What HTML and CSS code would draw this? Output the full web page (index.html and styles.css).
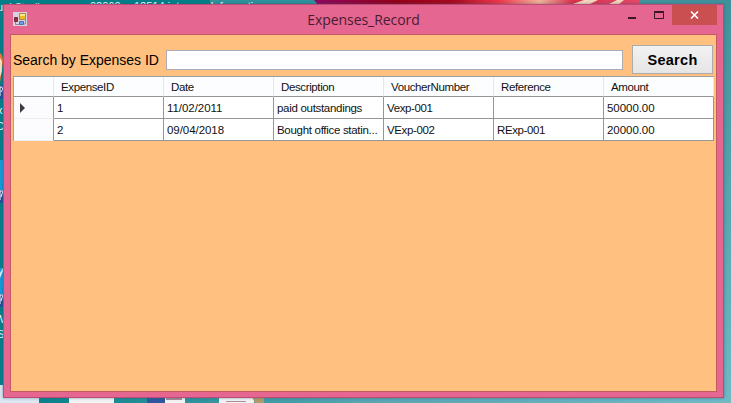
FILE: index.html
```
<!DOCTYPE html>
<html lang="en">
<head>
<meta charset="utf-8">
<title>Expenses_Record</title>
<link rel="stylesheet" href="styles.css">
</head>
<body>
<svg class="desktop" width="731" height="403" viewBox="0 0 731 403" aria-hidden="true">
  <defs>
    <linearGradient id="petal" x1="0" x2="1"><stop offset="0" stop-color="#8d0860"/><stop offset=".25" stop-color="#960018"/><stop offset=".42" stop-color="#a80b20"/><stop offset=".56" stop-color="#f0374c"/><stop offset=".68" stop-color="#f2b49a"/><stop offset=".78" stop-color="#d9304d"/><stop offset="1" stop-color="#e84a6c"/></linearGradient>
    <linearGradient id="side" x1="0" x2="0" y1="0" y2="1"><stop offset="0" stop-color="#3f929b"/><stop offset="1" stop-color="#70bac5"/></linearGradient>
    <linearGradient id="low" x1="0" x2="1"><stop offset="0" stop-color="#007f88"/><stop offset=".5" stop-color="#58a6b0"/><stop offset="1" stop-color="#70bac5"/></linearGradient>
  </defs>
  <rect width="731" height="403" fill="#008089"/>
  <rect x="210" width="110" height="5" fill="#2f929c"/>
  <path d="M314 0h332l-8 5H318z" fill="url(#petal)"/>
  <path d="M570 5l14-5h14l-10 5zM607 5l10-5h7l-6 5z" fill="#f4d6bc"/>
  <rect x="640" width="91" height="5" fill="#43929b"/>
  <rect x="723" width="8" height="403" fill="url(#side)"/>
  <rect y="397" width="731" height="6" fill="url(#low)"/>
  <path d="M0 385h4v12h35v6H0z" fill="#dce8f2"/>
  <path d="M69 397h45v6H69zM165 397h20v6h-20zM219 397h35v6h-35z" fill="#f4f4f4"/>
  <path d="M147 397h18v6h-18z" fill="#2e579e"/>
  <path d="M166 398h16v2h-16zM226 401h20v1h-20z" fill="#a78f99"/>
  <path d="M252 397h12v6h-9z" fill="#b09b70"/>
  <path d="M0 53q5 3 2 16l-2 14z" fill="#f07a32"/>
  <path d="M0 58l2 3v10l-2 6z" fill="#ffe3c9"/>
  <path d="M0 160h4v30H0zM0 268h4v26H0z" fill="#159bdc"/>
  <path d="M0 273l4-7v3l-4 9z" fill="#d5f4ff"/>
  <path d="M0 85h4v14H0zM0 190h4v13H0zM0 294h4v13H0z" fill="#244f9c"/>
  <path d="M0 96v-9h2q2 2-1 5M0 200v-9h3l-2 6M0 304v-9h3l-2 6" fill="none" stroke="#fff"/>
  <g class="desktop-label">
    <text x="-3" y="11">ual Studio</text><text x="79" y="10">w 02060</text><text x="134" y="10">12514.int</text><text x="186" y="10">ernz Information</text>
    <text x="-3" y="114">x</text><text x="-4" y="130">C</text><text x="-5" y="323">W</text><text x="-3" y="338">SI</text>
  </g>
</svg>
<main class="window">
  <header class="titlebar">
    <svg class="app-icon" width="15" height="15" viewBox="0 0 15 15">
      <path fill="#d9d3df" d="M0 0h14v14H0z"/><path fill="#f1b928" stroke="#a38b52" d="M6.500 1.500h6v6h-6z"/><path fill="#ffe681" d="M7 2h5v2H7z"/><path fill="#982d37" stroke="#713241" d="M1.500 5.500h3v4h-3z"/><path fill="#719ff0" stroke="#5369b5" d="M6.500 9.500h4v3h-4z"/><path stroke="#98838e" d="M2.500 10v2.500H6M12.500 8v4H11" fill="none"/>
    </svg>
    <h1>Expenses_Record</h1>
    <div class="controls">
      <svg width="53" height="20" viewBox="0 0 53 20"><path fill="#3a1527" d="M9 12h8v2H9z"/><path fill="none" stroke="#3a1527" d="M35.500 7.500h9v6h-9z"/><path stroke="#3a1527" d="M35 6.500h10"/></svg>
      <button class="close" aria-label="Close"><svg width="9" height="8" viewBox="0 0 9 8"><path d="M1 .5l7 7M8 .5l-7 7" stroke="#fff" stroke-width="1.600"/></svg></button>
    </div>
  </header>
  <section class="client">
    <form class="search">
      <label for="expense-id">Search by Expenses ID</label>
      <input id="expense-id" type="text">
      <button type="button">Search</button>
    </form>
    <table>
      <colgroup><col class="marker"><col><col><col><col><col><col></colgroup>
      <thead><tr><th></th><th>ExpenseID</th><th>Date</th><th>Description</th><th>VoucherNumber</th><th>Reference</th><th>Amount</th></tr></thead>
      <tbody>
        <tr><th><svg width="5" height="10" viewBox="0 0 5 10"><path d="M0 0l5 5-5 5z" fill="#3c3c44"/></svg></th><td>1</td><td class="number">11/02/2011</td><td class="description">paid outstandings</td><td>Vexp-001</td><td></td><td class="number">50000.00</td></tr>
        <tr><th></th><td>2</td><td class="number">09/04/2018</td><td class="description">Bought office statin...</td><td>VExp-002</td><td>RExp-001</td><td class="number">20000.00</td></tr>
      </tbody>
    </table>
  </section>
</main>
</body>
</html>
```
FILE: styles.css
```
* { box-sizing: border-box; }
body {
  margin: 0;
  width: 731px;
  height: 403px;
  padding: 4px 7px 5px 3px;
  overflow: hidden;
  font-family: "Liberation Sans", Arial, sans-serif;
}
.desktop { position: absolute; inset: 0; z-index: -1; }
.desktop-label { font-size: 11px; fill: #fff; }
.window {
  height: 394px;
  padding: 0 6px 6px;
  border: 1px solid #bb4c78;
  background: #e56690;
  box-shadow: 0 0 3px #34546788;
}
.titlebar { position: relative; display: flex; height: 29px; }
.app-icon { margin: 7px 0 0 3px; }
h1 {
  flex: 1;
  margin: 5px 0 0 -18px;
  text-align: center;
  color: #491b31;
  font: 14px/20px "Open Sans", sans-serif;
  letter-spacing: -.05px;
}
.controls { position: absolute; right: 0; top: 0; display: flex; }
.close {
  display: grid;
  place-items: center;
  width: 45px;
  height: 20px;
  padding: 0;
  border: 0;
  background: #c94f50;
}
.client { height: 358px; padding: 10px 2px; border: 1px solid #c55b60; background: #ffc080; }
.search { display: flex; align-items: flex-start; height: 31px; }
.search label { width: 153px; padding-top: 5px; font-size: 14px; line-height: 20px; white-space: nowrap; letter-spacing: -.02px; }
.search input { width: 457px; height: 20px; margin-top: 5px; padding: 0 4px; border: 1px solid #abadb3; background: #fff; }
.search button {
  width: 81px;
  height: 29px;
  margin-left: 9px;
  padding: 0;
  border: 1px solid #acacac;
  background: linear-gradient(#f2f2f2, #e5e5e5);
  color: #000;
  font: bold 14.500px/20px "Liberation Sans", sans-serif;
  letter-spacing: .3px;
}
table { width: 701px; table-layout: fixed; border-collapse: separate; border-spacing: 0; background: #fff; border-top: 1px solid #a0a0a0; border-left: 1px solid #a0a0a0; color: #111; font-size: 11.500px; }
col { width: 110px; }
col.marker { width: 40px; }
th, td { padding: 0 0 0 3px; border-right: 1px solid #969696; border-bottom: 1px solid #969696; text-align: left; font-weight: normal; white-space: nowrap; letter-spacing: -.38px; line-height: 18px; }
td.number { letter-spacing: -.05px; }
td.description { letter-spacing: -.3px; }
thead th { height: 20px; padding-left: 7px; background: #fcfdff; border-right-color: #e0e8f3; }
tbody tr { height: 22px; }
tbody th { padding-left: 6px; background: #fcfcfe; border-bottom-color: #eeeef4; }
tbody th svg { display: block; }
```
